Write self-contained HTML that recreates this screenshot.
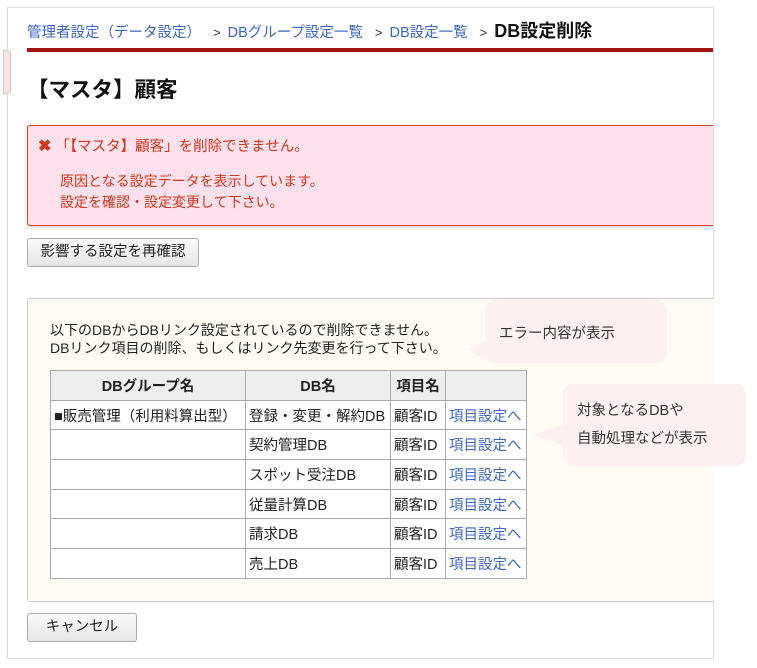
<!DOCTYPE html>
<html><head><meta charset="utf-8"><style>
body{margin:0;width:757px;height:668px;background:#fff;font-family:"Liberation Sans","Noto Sans CJK JP",sans-serif;position:relative;overflow:hidden;color:#222}
.a{position:absolute;white-space:nowrap}
.frame{left:7px;top:7px;width:705px;height:650px;border:1px solid #ddd}
.bc{left:27px;top:17px;font-size:14.5px;color:#3b66c0}
.bc span.g{color:#333;margin:0 7px 0 12px;font-size:13px}
.bc b{color:#111;font-size:18px}
.btn{border:1px solid #aaa;border-radius:3px;background:linear-gradient(#fafafa,#e6e6e6);font-size:14.5px;text-align:center;line-height:26px;color:#222}
table{border-collapse:collapse;font-size:14.5px}
td,th{border:1px solid #aaa;height:28.7px;padding:0 3px}
th{background:#eee;font-weight:bold}
td a{color:#3b66c0}
.bub{background:#fdf0f0;border-radius:10px;font-size:14.5px;color:#333}
</style></head><body>
<div class="a frame"></div>
<div class="a" style="left:3px;top:50px;width:6px;height:42px;background:#fbe3e3;border:1px solid #ccc;border-radius:0 3px 3px 0"></div>
<div class="a bc">管理者設定（データ設定）<span class="g">&gt;</span>DBグループ設定一覧<span class="g">&gt;</span>DB設定一覧<span class="g">&gt;</span><b>DB設定削除</b></div>
<div class="a" style="left:27px;top:48px;width:686px;height:4px;background:#a3160f"></div>
<div class="a" style="left:27px;top:73px;font-size:21.5px;font-weight:bold;color:#111">【マスタ】顧客</div>
<div class="a" style="left:27px;top:125px;width:700px;height:99px;background:#fce1ec;border:1px solid #d0422a;border-radius:3px;box-shadow:0 2px 3px rgba(0,0,0,.15)"></div>
<div class="a" style="left:713px;top:120px;width:44px;height:120px;background:#fff;border-left:1px solid #ddd"></div>
<div class="a" style="left:38px;top:135px;font-size:14.5px;color:#d3351a"><b style="font-size:16px">✖</b> 「【マスタ】顧客」を削除できません。</div>
<div class="a" style="left:60px;top:171px;font-size:14px;color:#d3351a;line-height:21px">原因となる設定データを表示しています。<br>設定を確認・設定変更して下さい。</div>
<div class="a btn" style="left:27px;top:238px;width:170px;height:27px">影響する設定を再確認</div>
<div class="a" style="left:27px;top:298px;width:686px;height:302px;background:#fdfbf3;border:1px solid #ccc;border-right:none;border-radius:3px 0 0 3px"></div>
<div class="a" style="left:50px;top:321px;font-size:14px;line-height:18px;color:#222">以下のDBからDBリンク設定されているので削除できません。<br>DBリンク項目の削除、もしくはリンク先変更を行って下さい。</div>
<table class="a" style="left:50px;top:370px;background:#fff">
<tr><th style="width:188px">DBグループ名</th><th style="width:138px">DB名</th><th style="width:48px">項目名</th><th style="width:74px"></th></tr>
<tr><td>■販売管理（利用料算出型）</td><td>登録・変更・解約DB</td><td>顧客ID</td><td><a>項目設定へ</a></td></tr>
<tr><td></td><td>契約管理DB</td><td>顧客ID</td><td><a>項目設定へ</a></td></tr>
<tr><td></td><td>スポット受注DB</td><td>顧客ID</td><td><a>項目設定へ</a></td></tr>
<tr><td></td><td>従量計算DB</td><td>顧客ID</td><td><a>項目設定へ</a></td></tr>
<tr><td></td><td>請求DB</td><td>顧客ID</td><td><a>項目設定へ</a></td></tr>
<tr><td></td><td>売上DB</td><td>顧客ID</td><td><a>項目設定へ</a></td></tr>
</table>
<div class="a bub" style="left:485px;top:300px;width:182px;height:63px"><div style="padding:22px 0 0 14px">エラー内容が表示</div></div>
<div class="a" style="left:468px;top:340px;width:0;height:0;border-top:10px solid transparent;border-bottom:10px solid transparent;border-right:20px solid #fdf0f0"></div>
<div class="a bub" style="left:563px;top:384px;width:183px;height:82px;line-height:28px"><div style="padding:13px 0 0 14px">対象となるDBや<br>自動処理などが表示</div></div>
<div class="a" style="left:533px;top:425px;width:0;height:0;border-top:10px solid transparent;border-bottom:10px solid transparent;border-right:30px solid #fdf0f0"></div>
<div class="a btn" style="left:27px;top:613px;width:108px;height:27px">キャンセル</div>
</body></html>
